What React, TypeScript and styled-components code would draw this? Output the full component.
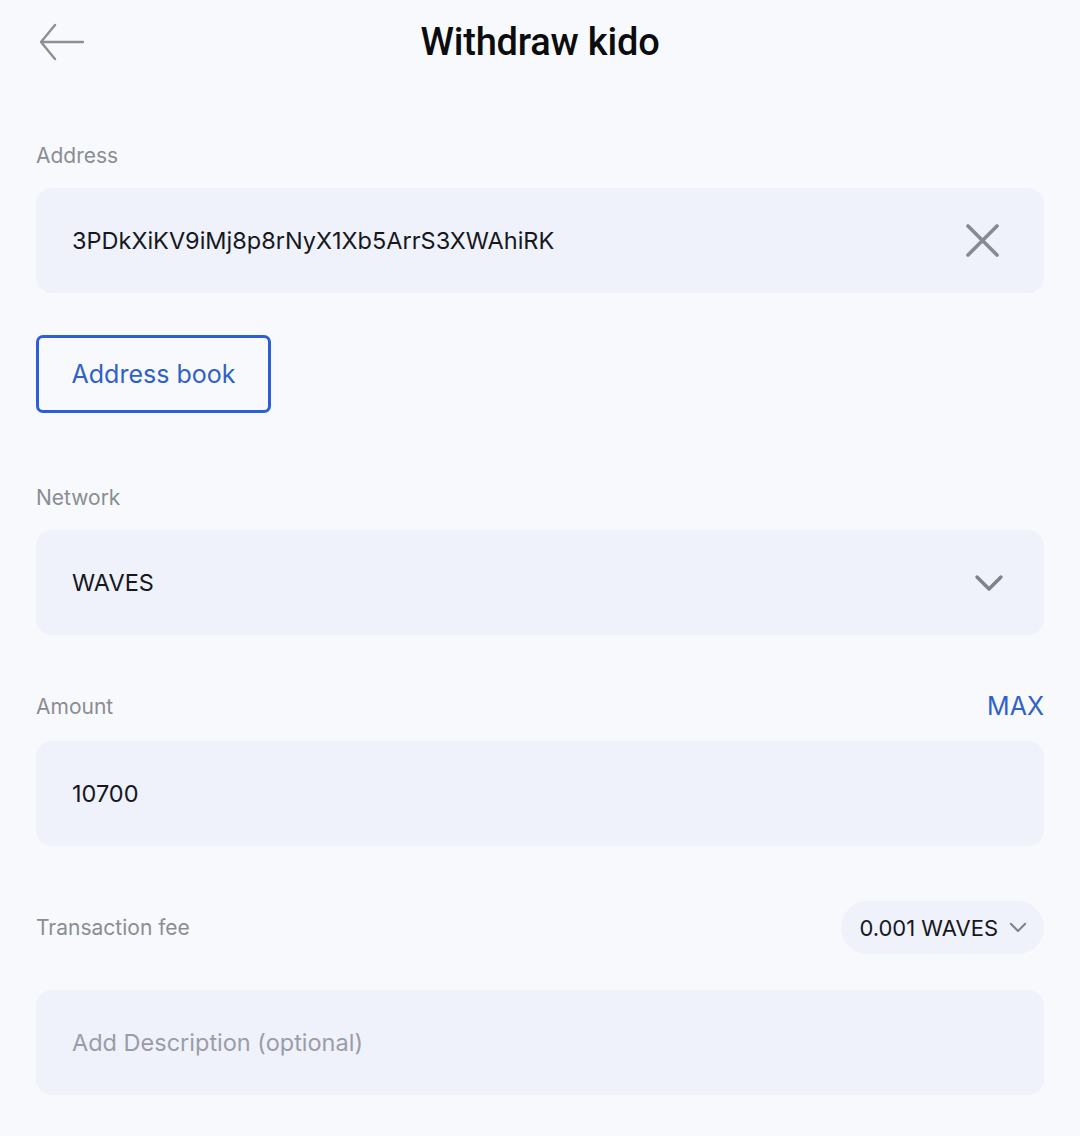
import * as React from "react"
import styled, { createGlobalStyle } from "styled-components"

const GlobalStyle = createGlobalStyle`
  html, body {
    margin: 0;
    padding: 0;
    background: #f8f9fc;
  }
  body {
    font-family: Inter, "Noto Sans", "Liberation Sans", sans-serif;
    -webkit-font-smoothing: antialiased;
  }
`

const Page = styled.div`
  width: 1080px;
  min-height: 1136px;
  box-sizing: border-box;
  padding: 0 36px;
  background: #f8f9fc;
`

const Header = styled.header`
  height: 84px;
  display: grid;
  grid-template-columns: 1fr auto 1fr;
  align-items: center;
`

const BackButton = styled.button`
  justify-self: start;
  width: 48px;
  height: 40px;
  margin-left: 4px;
  padding: 0;
  border: 0;
  background: none;
  display: flex;
  align-items: center;
  cursor: pointer;
`

const Title = styled.h1`
  margin: 0;
  font-family: Roboto, "Liberation Sans", sans-serif;
  font-size: 38px;
  font-weight: 500;
  letter-spacing: -0.2px;
  color: #0b0c0e;
`

const Section = styled.section<{ $gap: number }>`
  margin-top: ${p => p.$gap}px;
`

const LabelRow = styled.div<{ $height?: number }>`
  height: ${p => p.$height ?? 28}px;
  display: flex;
  align-items: center;
  justify-content: space-between;
`

const Label = styled.span`
  font-size: 21px;
  color: #8a8d93;
`

const MaxLink = styled.button`
  padding: 0;
  border: 0;
  background: none;
  font-family: inherit;
  font-size: 25px;
  color: #2f62c8;
  cursor: pointer;
`

const Field = styled.div<{ $muted?: boolean }>`
  margin-top: 19px;
  height: 105px;
  box-sizing: border-box;
  padding: 0 40px 0 36px;
  border-radius: 16px;
  background: #eff1fb;
  display: flex;
  align-items: center;
  justify-content: space-between;
  font-size: 23.5px;
  color: ${p => (p.$muted ? "#9a9da6" : "#16181d")};
`

const IconButton = styled.span<{ $inset?: number }>`
  margin-right: ${p => p.$inset ?? 0}px;
  display: flex;
  align-items: center;
  justify-content: center;
`

const OutlineButton = styled.button`
  margin-top: 42px;
  width: 235px;
  height: 78px;
  box-sizing: border-box;
  border: 3px solid #2b5fd9;
  border-radius: 7px;
  background: transparent;
  font-family: inherit;
  font-size: 25px;
  color: #2f62c8;
  cursor: pointer;
`

const FeeRow = styled.div`
  margin-top: 55px;
  height: 53px;
  display: flex;
  align-items: center;
  justify-content: space-between;
`

const FeePill = styled.button`
  height: 53px;
  padding: 0 17px 0 18px;
  border: 0;
  border-radius: 27px;
  background: #eff1fb;
  display: flex;
  align-items: center;
  gap: 11px;
  font-family: inherit;
  font-size: 22px;
  color: #16181d;
  cursor: pointer;
`

const DescriptionField = styled(Field)`
  margin-top: 36px;
`

const BackArrow = () => (
  <svg width="44" height="38" viewBox="0 0 44 38" fill="none">
    <path d="M15 2 L1 19 L15 36 M1 19 H43" stroke="#8c8f94" strokeWidth="2.4" strokeLinecap="round" strokeLinejoin="round" />
  </svg>
)

const ClearIcon = () => (
  <svg width="33" height="33" viewBox="0 0 33 33" fill="none">
    <path d="M2 2 L31 31 M31 2 L2 31" stroke="#878a91" strokeWidth="3.6" strokeLinecap="round" />
  </svg>
)

const Chevron = ({ size, stroke }: { size: number; stroke: number }) => (
  <svg width={size} height={size * 0.6} viewBox="0 0 30 18" fill="none">
    <path d="M3 3 L15 15 L27 3" stroke="#7f828a" strokeWidth={stroke} strokeLinecap="round" strokeLinejoin="round" />
  </svg>
)

export default function App() {
  return (
    <Page>
      <GlobalStyle />
      <Header>
        <BackButton aria-label="Back">
          <BackArrow />
        </BackButton>
        <Title>Withdraw kido</Title>
        <span />
      </Header>

      <Section $gap={57}>
        <LabelRow>
          <Label>Address</Label>
        </LabelRow>
        <Field>
          <span>3PDkXiKV9iMj8p8rNyX1Xb5ArrS3XWAhiRK</span>
          <IconButton $inset={5}>
            <ClearIcon />
          </IconButton>
        </Field>
        <OutlineButton>Address book</OutlineButton>
      </Section>

      <Section $gap={70}>
        <LabelRow>
          <Label>Network</Label>
        </LabelRow>
        <Field>
          <span>WAVES</span>
          <IconButton>
            <Chevron size={30} stroke={3.4} />
          </IconButton>
        </Field>
      </Section>

      <Section $gap={55}>
        <LabelRow $height={32}>
          <Label>Amount</Label>
          <MaxLink>MAX</MaxLink>
        </LabelRow>
        <Field>
          <span>10700</span>
        </Field>
      </Section>

      <FeeRow>
        <Label>Transaction fee</Label>
        <FeePill>
          0.001 WAVES
          <Chevron size={18} stroke={3.4} />
        </FeePill>
      </FeeRow>

      <DescriptionField $muted>
        <span>Add Description (optional)</span>
      </DescriptionField>
    </Page>
  )
}
